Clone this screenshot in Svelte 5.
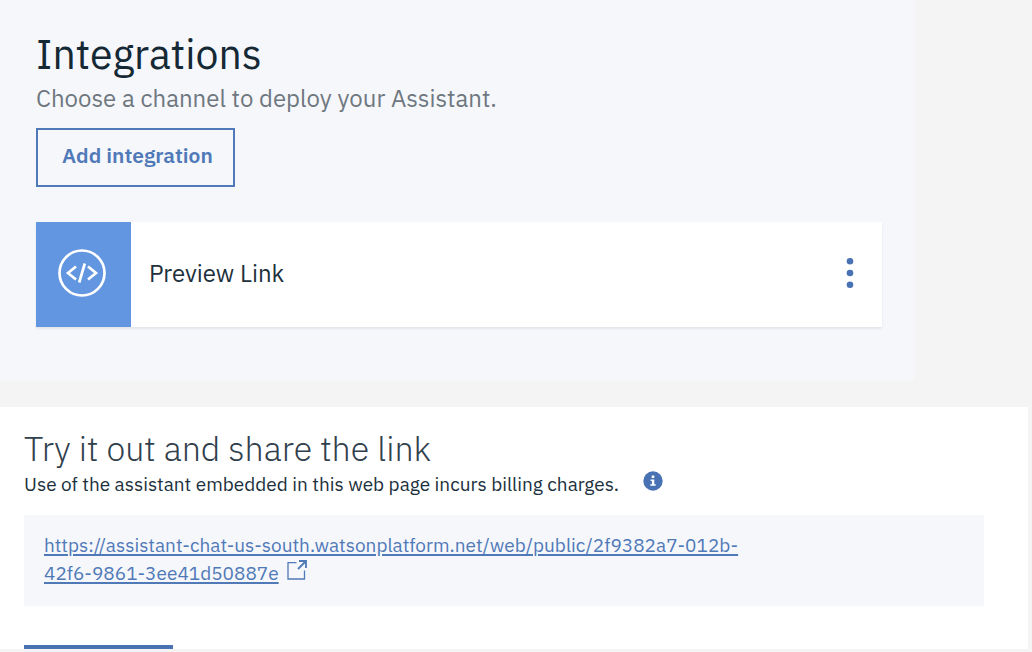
<script>
  const url =
    'https://assistant-chat-us-south.watsonplatform.net/web/public/2f9382a7-012b-42f6-9861-3ee41d50887e';
</script>

<main class="page">
  <section class="integrations" aria-labelledby="integrations-title">
    <h1 id="integrations-title">Integrations</h1>
    <p class="lead">Choose a channel to deploy your Assistant.</p>
    <button class="outline" type="button">Add integration</button>

    <article class="card">
      <div class="tile">
        <svg width="48" height="48" viewBox="0 0 48 48" aria-hidden="true">
          <circle cx="24" cy="24" r="22.5" />
          <path d="M18 17.5 L10 24 L18 30.5 M30 17.5 L38 24 L30 30.5 M26.8 14.5 L21.2 33.5" />
        </svg>
      </div>
      <h2 class="name">Preview Link</h2>
      <button class="menu" type="button" aria-label="Preview Link options">
        <svg width="8" height="32" viewBox="0 0 8 32" aria-hidden="true">
          <circle cx="4" cy="4.3" r="3.3" />
          <circle cx="4" cy="16" r="3.3" />
          <circle cx="4" cy="27.7" r="3.3" />
        </svg>
      </button>
    </article>
  </section>

  <section class="share" aria-labelledby="share-title">
    <h2 id="share-title" class="title">Try it out and share the link</h2>
    <div class="note">
      <p>Use of the assistant embedded in this web page incurs billing charges.</p>
      <button class="info" type="button" aria-label="Billing information">
        <svg width="20" height="20" viewBox="0 0 20 20" aria-hidden="true">
          <circle cx="10" cy="10" r="9.7" fill="#4872b3" />
          <path d="M8.7 4.5h2.6v2.6H8.7zM7.6 8.4h3.7v4.9h1.4v1.5H7.3v-1.5h1.6V9.9H7.6z" fill="#fff" />
        </svg>
      </button>
    </div>
    <div class="linkbox">
      <a href={url}>{url}</a>
      <svg class="launch" width="20" height="20" viewBox="0 0 20 20" aria-hidden="true">
        <path d="M9.5 2.7H1V19h16.5v-8.6" stroke-width="1.3" />
        <path d="M12 1h7v7" stroke-width="1.8" />
        <path d="M18.5 1.5L11 9" stroke-width="1.8" />
      </svg>
    </div>
    <button class="primary" type="button" aria-label="Return to Assistants"></button>
  </section>
</main>

<style>
  :global(body) {
    margin: 0;
    background: #f4f4f4;
  }

  .page {
    box-sizing: border-box;
    display: grid;
    grid-template-rows: auto minmax(0, 1fr);
    gap: 26px;
    height: 100vh;
    padding-bottom: 3px;
    font-family: 'IBM Plex Sans', 'Noto Sans', sans-serif;
    font-size: 19px;
    line-height: 28px;
    color: #20303c;
  }

  h1,
  h2,
  p {
    margin: 0;
    font-weight: 400;
  }

  button {
    font: inherit;
    cursor: pointer;
  }

  .integrations {
    margin-right: 118px;
    padding: 27px 32px 54px 36px;
    background: #f5f7fb;
  }

  h1 {
    font-size: 41px;
    line-height: 53px;
    color: #152935;
  }

  .lead {
    font-size: 24px;
    line-height: 36px;
    color: #6f777f;
  }

  .outline {
    display: block;
    box-sizing: border-box;
    height: 59px;
    margin: 12px 0 35px;
    padding: 0 20px 6px 24px;
    border: 2px solid #5079b8;
    background: transparent;
    color: #5079b8;
    font-size: 21px;
    font-weight: 600;
  }

  .card {
    display: flex;
    align-items: center;
    height: 105px;
    background: #fff;
    box-shadow: 0 2px 2px #e3e7ec;
  }

  .tile {
    display: flex;
    align-items: center;
    align-self: stretch;
    box-sizing: border-box;
    width: 95px;
    padding: 0 22px 4px;
    background: #6396e0;
  }

  .tile svg {
    fill: none;
    stroke: #fff;
    stroke-width: 2.7;
  }

  .name {
    flex: 1;
    padding: 0 0 4px 18px;
    font-size: 24px;
  }

  .menu {
    display: flex;
    padding: 0 28px 4px;
    border: 0;
    background: none;
    fill: #4872b3;
  }

  .share {
    margin-right: 4px;
    padding: 19px 44px 0 24px;
    overflow: hidden;
    background: #fff;
  }

  .title {
    font-size: 34px;
    line-height: 44px;
    font-weight: 300;
    color: #30404c;
  }

  .note {
    display: flex;
    gap: 24px;
  }

  .info {
    height: 20px;
    padding: 0;
    border: 0;
    background: none;
  }

  .linkbox {
    margin: 17px 0 39px;
    padding: 16px 200px 19px 20px;
    background: #f5f7fb;
    color: #5079b8;
  }

  .linkbox a {
    color: inherit;
    text-underline-offset: 2px;
    text-decoration-thickness: 2px;
  }

  .launch {
    margin-left: 4px;
    fill: none;
    stroke: currentColor;
  }

  .primary {
    display: block;
    width: 149px;
    height: 60px;
    border: 0;
    background: #4872b3;
  }
</style>
